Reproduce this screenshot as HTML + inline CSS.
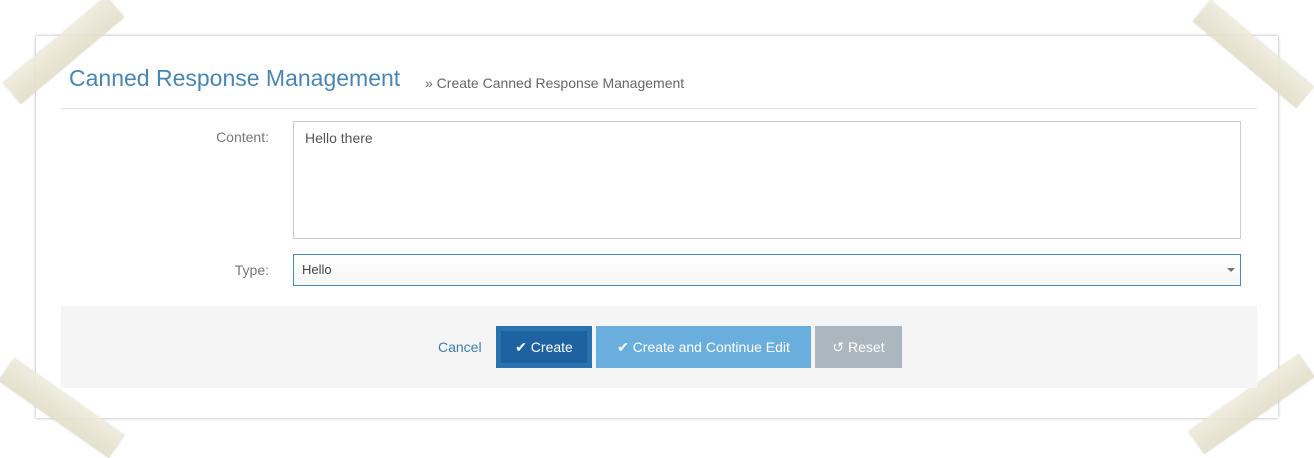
<!DOCTYPE html>
<html><head><style>
body{margin:0;width:1314px;height:455px;background:#fff;position:relative;overflow:hidden;font-family:"Liberation Sans",sans-serif;}
.card{position:absolute;left:36px;top:36px;width:1242px;height:382px;background:#fff;box-shadow:0 0 3px rgba(0,0,0,.35);}
.tape{position:absolute;background:linear-gradient(180deg,#eeebdc,#e2dec9);opacity:.9;box-shadow:0 0 2px rgba(0,0,0,.15);}
.h1{position:absolute;left:69px;top:65px;font-size:23px;color:#4a86b0;}
.bc{position:absolute;left:425px;top:75px;font-size:14px;color:#666;}
.hr{position:absolute;left:61px;top:108px;width:1196px;height:1px;background:#e2e2e2;}
.lbl{position:absolute;font-size:14px;color:#777;text-align:right;width:100px;}
.ta{position:absolute;left:293px;top:121px;width:946px;height:116px;border:1px solid #ccc;}
.sel{position:absolute;left:293px;top:254px;width:946px;height:30px;border:1px solid #4a8ab8;background:linear-gradient(#fff,#f7f7f7);}
.txt{position:absolute;font-size:14px;color:#555;}
.foot{position:absolute;left:61px;top:306px;width:1196px;height:82px;background:#f5f5f5;}
.btn{position:absolute;top:326px;height:42px;color:#fff;font-size:14px;line-height:42px;text-align:center;}
</style></head><body>
<div class="card"></div>
<div class="tape" style="left:-4px;top:36px;width:135px;height:28px;transform:rotate(-40deg);"></div>
<div class="tape" style="left:1186px;top:40px;width:135px;height:28px;transform:rotate(40deg);"></div>
<div class="tape" style="left:-6px;top:394px;width:135px;height:28px;transform:rotate(35deg);"></div>
<div class="tape" style="left:1184px;top:390px;width:135px;height:28px;transform:rotate(-35deg);"></div>
<div class="h1">Canned Response Management</div>
<div class="bc">» Create Canned Response Management</div>
<div class="hr"></div>
<div class="lbl" style="left:169px;top:129px;">Content:</div>
<div class="ta"></div>
<div class="txt" style="left:305px;top:130px;">Hello there</div>
<div class="lbl" style="left:169px;top:262px;">Type:</div>
<div class="sel"></div>
<div class="txt" style="left:302px;top:262px;font-size:13px;color:#444;">Hello</div>
<div style="position:absolute;left:1227px;top:268px;width:0;height:0;border-left:4px solid transparent;border-right:4px solid transparent;border-top:4px solid #777;"></div>
<div class="foot"></div>
<div class="txt" style="left:438px;top:339px;color:#3f7fab;">Cancel</div>
<div class="btn" style="left:496px;width:96px;background:#2b72b0;"><div style="position:absolute;left:5px;top:5px;right:5px;bottom:5px;background:#1f62a0;"></div><span style="position:relative">✔ Create</span></div>
<div class="btn" style="left:596px;width:215px;background:#6aaedd;">✔ Create and Continue Edit</div>
<div class="btn" style="left:815px;width:87px;background:#abb6bf;">↺ Reset</div>
</body></html>
